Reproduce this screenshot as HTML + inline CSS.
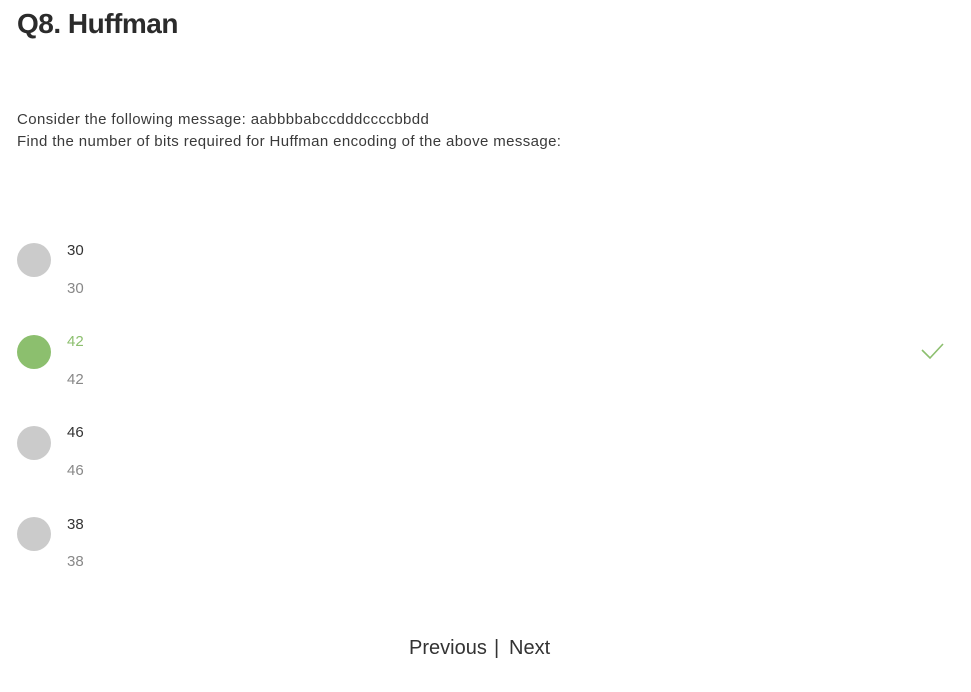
<!DOCTYPE html>
<html><head><style>
body{margin:0;background:#fff;font-family:"Liberation Sans",sans-serif;width:971px;height:692px;position:relative;overflow:hidden}
.a{position:absolute;white-space:nowrap}
h1{position:absolute;left:17px;top:8px;margin:0;font-size:28px;font-weight:bold;color:#2b2b2b;letter-spacing:-0.5px}
.q{left:17px;font-size:15px;color:#3a3a3a;letter-spacing:0.4px}
.c{position:absolute;left:17px;width:34px;height:34px;border-radius:50%;background:#cbcbcb}
.t1{left:67px;font-size:15px;color:#333}
.t2{left:67px;font-size:15px;color:#888}
.n{top:637px;font-size:20px;color:#333}
</style></head><body>
<h1>Q8. Huffman</h1>
<div class="a q" style="top:111px">Consider the following message: aabbbbabccdddccccbbdd</div>
<div class="a q" style="top:133px;letter-spacing:0.38px">Find the number of bits required for Huffman encoding of the above message:</div>

<div class="c" style="top:243px"></div>
<div class="a t1" style="top:242px">30</div><div class="a t2" style="top:280px">30</div>

<div class="c" style="top:335px;background:#8cbf6e"></div>
<div class="a t1" style="top:333px;color:#8cbf6e">42</div><div class="a t2" style="top:371px">42</div>

<div class="c" style="top:426px"></div>
<div class="a t1" style="top:424px">46</div><div class="a t2" style="top:462px">46</div>

<div class="c" style="top:517px"></div>
<div class="a t1" style="top:516px">38</div><div class="a t2" style="top:553px">38</div>

<svg class="a" style="left:915px;top:338px" width="35" height="26"><path d="M7 12 L15 20 L28 6" fill="none" stroke="#8cbf6e" stroke-width="1.6"/></svg>

<div class="a n" style="left:409px">Previous</div>
<div class="a n" style="left:494px">|</div>
<div class="a n" style="left:509px">Next</div>
</body></html>
